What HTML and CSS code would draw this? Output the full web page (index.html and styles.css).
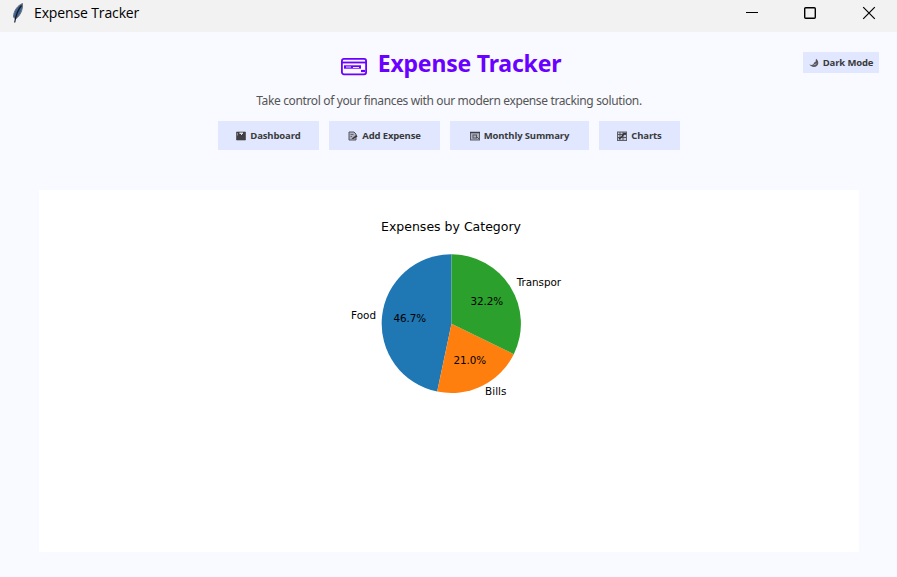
FILE: index.html
```html
<!DOCTYPE html>
<html lang="en">
<head>
<meta charset="utf-8">
<title>Expense Tracker</title>
<link rel="stylesheet" href="styles.css">
</head>
<body>
<div class="titlebar">
  <svg class="feather" width="14" height="20" viewBox="0 0 14 20"><path d="M11.5.5C6.500 2.500 2.500 8 2.500 14L4.500 16C9 13 12 7 11.500.5Z" fill="#3c6290" stroke="#68727d"/><path d="M10.500 2.500C7 6.500 5 11 3.700 19.500" fill="none" stroke="#15191f" stroke-width="1.200"/></svg>
  <span class="window-title">Expense Tracker</span>
  <svg class="controls" width="132" height="16" viewBox="0 0 132 16" fill="none" stroke="#000"><path d="M0 7.500H12" stroke-width="1"/><rect x="58.700" y="2.700" width="10.600" height="10.600" rx="1" stroke-width="1.400"/><path d="M117.200 2.200L128.800 13.800M128.800 2.200L117.200 13.800" stroke-width="1.200"/></svg>
</div>
<header class="header">
  <h1 class="brand">
    <svg width="28" height="20" viewBox="0 0 28 20" fill="none" stroke="#6a00ff" stroke-width="1.800"><rect x="1.900" y="1.900" width="24.200" height="15.400" rx="2"/><path d="M2 5.500H26" stroke-width="1.800"/><path d="M4 10H21" stroke-width="3.400"/><path d="M6 10H11M13 10.500H19" stroke="#f8faff" stroke-width=".9"/><path d="M21 14H25" stroke-width="2.200"/></svg>
    <span class="brand-name">Expense Tracker</span>
  </h1>
  <p class="tagline">Take control of your finances with our modern expense tracking solution.</p>
  <nav class="nav">
    <button class="btn dashboard"><svg width="10" height="10" viewBox="0 0 10 10"><path d="M.5 1H9.500V9H.5Z" fill="#404044" stroke="#404044" stroke-width=".6"/><path d="M3.500 1.500H7V3H6V4H5V3H3.500Z" fill="#d9ddea"/><path d="M1.500 2V4.500" stroke="#888"/></svg><span>Dashboard</span></button>
    <button class="btn add"><svg width="10" height="10" viewBox="0 0 10 10"><path d="M1 1H6L8 3V9H1Z" fill="#aeb1c8" stroke="#55555c"/><path d="M2.500 3.500H5.500M2.500 5.500H4" stroke="#666"/><path d="M3.500 8L5 6.500L8.500 4L9.500 5.500L5.500 8Z" fill="#38383b"/></svg><span>Add Expense</span></button>
    <button class="btn monthly"><svg width="10" height="10" viewBox="0 0 10 10"><rect x=".5" y="1.500" width="9" height="7.500" fill="#aeb2c8" stroke="#5a5a62"/><path d="M0 1.500H10" stroke="#404044" stroke-width="1.500"/><rect x="3" y="4" width="3.500" height="3" fill="none" stroke="#55555c"/><path d="M7 6L9 8" stroke="#55555c"/></svg><span>Monthly Summary</span></button>
    <button class="btn charts"><svg width="10" height="10" viewBox="0 0 10 10"><rect x=".5" y="1" width="9" height="8.500" fill="#c4c8dc" stroke="#606068"/><path d="M3 1V9M6 1V9M1 3.500H9M1 6.500H9" stroke="#55555c"/><path d="M2 8L5 5.500L7 2.500H9" fill="none" stroke="#333337" stroke-width="1.400"/></svg><span>Charts</span></button>
  </nav>
  <button class="btn theme"><svg width="10" height="10" viewBox="0 0 10 10"><path d="M7 .8C8.500 2 9.500 3.500 9.200 5.500C8.700 9.500 3 10.200.3 6.500C3 7.500 5 6.500 5 4.500L6.500 4Z" fill="#55555b"/><path d="M4.500 7L7.500 5.800" stroke="#a4a8bc"/></svg><span>Dark Mode</span></button>
</header>
<main class="panel">
  <svg class="chart" width="820" height="362" viewBox="39 190 820 362">
    <path d="M451.500 323.700V254.200A69.400 69.400 0 0 0 437.200 391.600Z" fill="#1f77b4"/>
    <path d="M451.500 323.700L437.200 391.600A69.400 69.400 0 0 0 513.800 354.200Z" fill="#ff7f0e"/>
    <path d="M451.500 323.700L513.800 354.200A69.400 69.400 0 0 0 451.500 254.200Z" fill="#2ca02c"/>
    <g class="chart-text">
      <text class="chart-title" x="381" y="231" textLength="140">Expenses by Category</text>
      <text x="351" y="319" textLength="25">Food</text>
      <text x="393.500" y="322" textLength="32.500">46.7%</text>
      <text x="485" y="395" textLength="21.500">Bills</text>
      <text x="453.500" y="364" textLength="32.500">21.0%</text>
      <text x="516.700" y="286" textLength="44.300">Transpor</text>
      <text x="470.500" y="305" textLength="32.500">32.2%</text>
    </g>
  </svg>
</main>
</body>
</html>
```
FILE: styles.css
```css
* { box-sizing: border-box; }
body {
  margin: 0;
  height: 577px;
  overflow: hidden;
  background: #f8faff;
  font-family: "Noto Sans", "Open Sans", sans-serif;
}
.titlebar {
  height: 32px;
  padding: 0 20px 6px 11px;
  display: flex;
  align-items: center;
  background: #f2f2f2;
}
.feather { flex: none; margin-top: -1px; }
.window-title {
  margin-left: 9px;
  font-family: "Open Sans", sans-serif;
  font-size: 14px;
  line-height: 20px;
  letter-spacing: -0.13px;
  color: #000;
  white-space: nowrap;
}
.controls { margin-left: auto; margin-right: -1px; }
.header {
  position: relative;
  height: 158px;
  padding-top: 14px;
  display: flex;
  flex-direction: column;
  align-items: center;
}
.brand {
  margin: 0 0 0 4px;
  height: 34px;
  display: flex;
  align-items: center;
  gap: 10px;
  color: #6a00ff;
  font-size: 23px;
  line-height: 32px;
  letter-spacing: -0.2px;
  white-space: nowrap;
}
.brand svg { margin-top: 7px; }
.brand-name { margin-top: -1px; }
.tagline {
  margin: 11px 0 0 1px;
  height: 20px;
  font-size: 12px;
  line-height: 20px;
  letter-spacing: -0.36px;
  color: #555;
  white-space: nowrap;
}
.nav { display: flex; gap: 10px; margin-top: 10px; margin-left: 1px; }
.btn {
  height: 29px;
  padding: 0;
  border: 0;
  display: flex;
  align-items: center;
  justify-content: center;
  gap: 4px;
  background: #e0e7ff;
  color: #3a3a3a;
  font: bold 9.5px/14px "Open Sans", sans-serif;
  letter-spacing: -0.15px;
  white-space: nowrap;
}
.dashboard { width: 101px; }
.add { width: 111px; }
.monthly { width: 139px; }
.charts { width: 81px; }
.theme {
  position: absolute;
  top: 20px;
  right: 18px;
  width: 76px;
  height: 21px;
}
.panel { width: 820px; height: 362px; margin-left: 39px; background: #fff; }
.chart { display: block; }
.chart-text { font: 10.4px "DejaVu Sans", sans-serif; fill: #000; }
.chart-title { font-size: 12.5px; }
```
